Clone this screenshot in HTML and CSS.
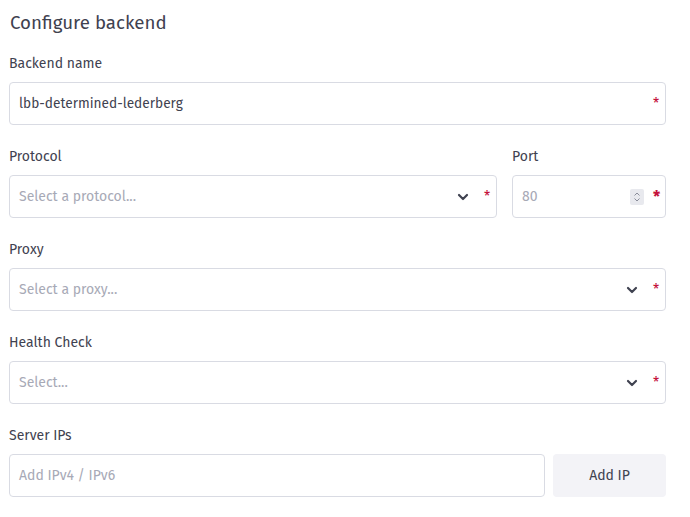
FILE: index.html
```html
<!DOCTYPE html>
<html>
<head>
<meta charset="utf-8">
<link rel="stylesheet" href="styles.css">
</head>
<body>
<form class="form">
  <h1 class="title">Configure backend</h1>
  <div class="field">
    <label class="label">Backend name</label>
    <div class="box">
      <span class="value">lbb-determined-lederberg</span>
      <span class="req">*</span>
    </div>
  </div>
  <div class="row">
    <div class="field grow">
      <label class="label">Protocol</label>
      <div class="box">
        <span class="placeholder">Select a protocol...</span>
        <svg class="chev" width="12" height="8" viewBox="0 0 12 8"><path d="M2 2l4 4 4-4" fill="none" stroke="#3f4250" stroke-width="2.2" stroke-linecap="round" stroke-linejoin="round"/></svg>
        <span class="req">*</span>
      </div>
    </div>
    <div class="field port">
      <label class="label">Port</label>
      <div class="box">
        <span class="placeholder">80</span>
        <span class="spin"><svg width="8" height="12" viewBox="0 0 8 12"><path d="M1.5 4.5L4 2l2.5 2.5M1.5 7.5L4 10l2.5-2.5" fill="none" stroke="#8a8d9a" stroke-width="1"/></svg></span>
        <span class="req big">*</span>
      </div>
    </div>
  </div>
  <div class="field">
    <label class="label">Proxy</label>
    <div class="box">
      <span class="placeholder">Select a proxy...</span>
      <svg class="chev" width="12" height="8" viewBox="0 0 12 8"><path d="M2 2l4 4 4-4" fill="none" stroke="#3f4250" stroke-width="2.2" stroke-linecap="round" stroke-linejoin="round"/></svg>
      <span class="req">*</span>
    </div>
  </div>
  <div class="field">
    <label class="label">Health Check</label>
    <div class="box">
      <span class="placeholder">Select...</span>
      <svg class="chev" width="12" height="8" viewBox="0 0 12 8"><path d="M2 2l4 4 4-4" fill="none" stroke="#3f4250" stroke-width="2.2" stroke-linecap="round" stroke-linejoin="round"/></svg>
      <span class="req">*</span>
    </div>
  </div>
  <div class="field">
    <label class="label">Server IPs</label>
    <div class="iprow">
      <div class="box grow">
        <span class="placeholder">Add IPv4 / IPv6</span>
      </div>
      <button type="button" class="btn">Add IP</button>
    </div>
  </div>
</form>
</body>
</html>
```
FILE: styles.css
```css
* { box-sizing: border-box; }
body {
  margin: 0;
  background: #fff;
  font-family: "Fira Sans", Roboto, "Noto Sans", sans-serif;
  color: #3f4250;
}
.form {
  width: 657px;
  margin: 0 0 0 9px;
  padding-top: 11px;
  display: flex;
  flex-direction: column;
  gap: 22px;
}
.title {
  margin: 0 0 -3px 1px;
  font-size: 18.7px;
  line-height: 24px;
  font-weight: 400;
  color: #3f4250;
}
.field { display: flex; flex-direction: column; }
.label {
  font-size: 14px;
  line-height: 20px;
  margin-bottom: 8px;
  color: #3f4250;
}
.row { display: flex; gap: 15px; }
.grow { flex: 1; min-width: 0; }
.port { width: 154px; }
.box {
  height: 43px;
  border: 1px solid #d9dbe3;
  border-radius: 4px;
  display: flex;
  align-items: center;
  padding: 0 6px 0 9px;
  font-size: 14px;
}
.value { flex: 1; color: #3f4250; font-size: 13.7px; }
.placeholder { flex: 1; color: #a7a9b6; }
.chev { margin-right: 15px; }
.req { color: #c4133c; font-size: 14px; width: 6px; }
.req.big { font-size: 16px; font-weight: 700; }
.spin {
  width: 14px;
  height: 16px;
  background: #e8e9ee;
  border-radius: 2px;
  display: flex;
  align-items: center;
  justify-content: center;
  margin-right: 9px;
}
.iprow { display: flex; gap: 8px; }
.btn {
  width: 113px;
  height: 43px;
  border: 0;
  border-radius: 4px;
  background: #f3f3f7;
  color: #3f4250;
  font-family: inherit;
  font-size: 14px;
  padding: 0;
}
```
